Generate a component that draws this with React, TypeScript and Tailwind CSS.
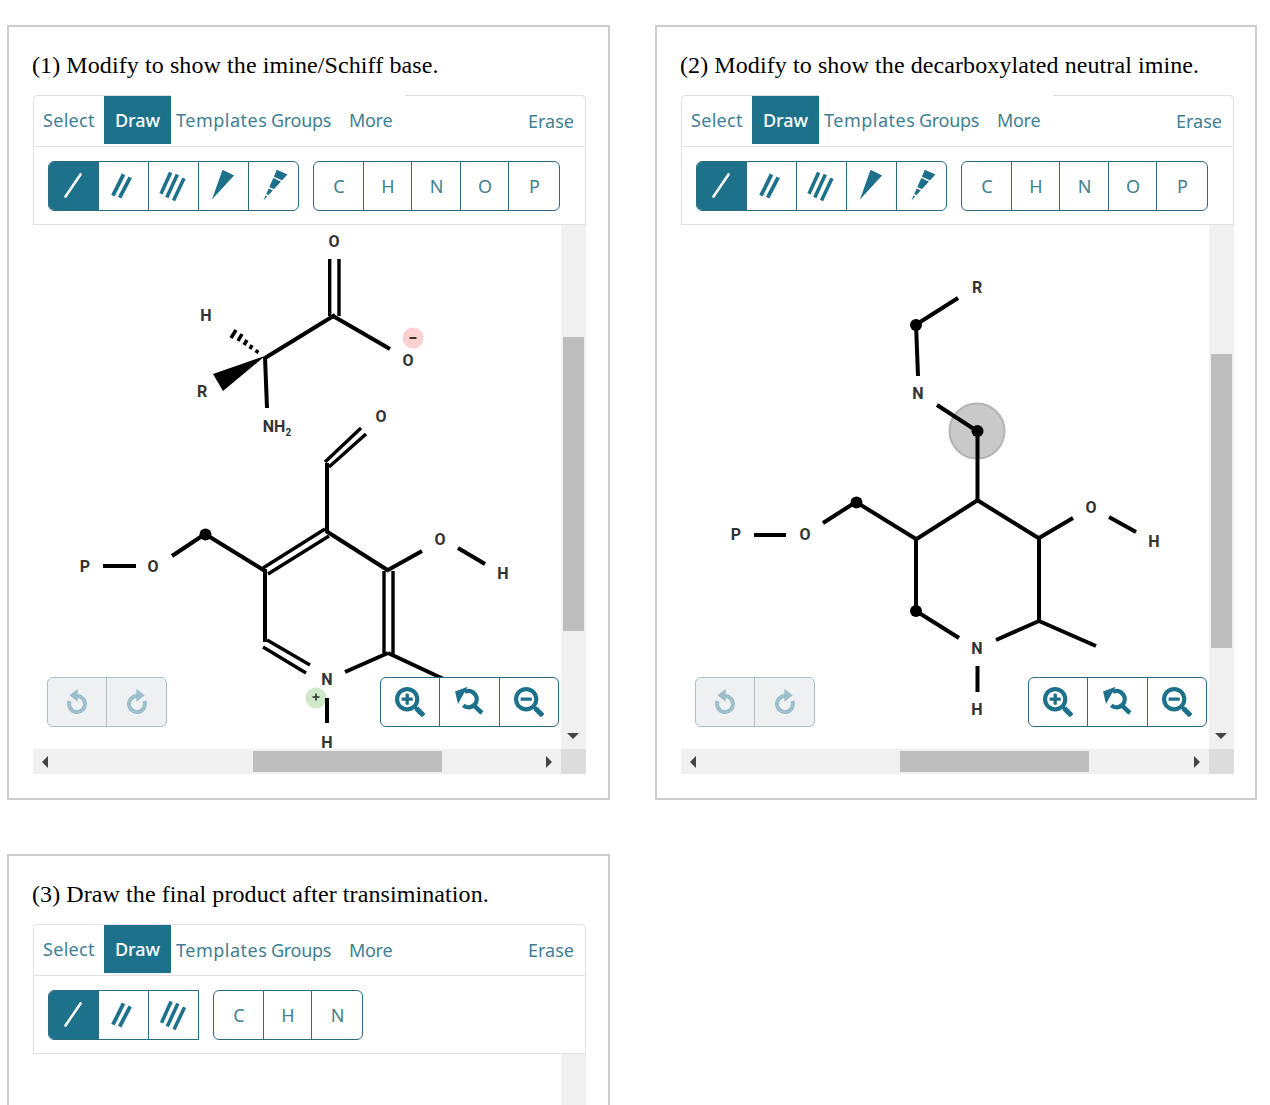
import { FaSearchPlus, FaSearchMinus } from "react-icons/fa"

const TEAL = "#1e718b"

function SingleBond({ active }: { active?: boolean }) {
  return (
    <svg viewBox="0 0 50 50" className="w-full h-full">
      <line x1="16" y1="37" x2="33" y2="12" stroke={active ? "#fff" : TEAL} strokeWidth="2.6" />
    </svg>
  )
}

function DoubleBond() {
  return (
    <svg viewBox="0 0 50 50" className="w-full h-full">
      <line x1="14" y1="35" x2="25" y2="13" stroke={TEAL} strokeWidth="4" />
      <line x1="21" y1="37" x2="32" y2="16" stroke={TEAL} strokeWidth="4" />
    </svg>
  )
}

function TripleBond() {
  return (
    <svg viewBox="0 0 50 50" className="w-full h-full">
      <line x1="12" y1="33" x2="22" y2="11" stroke={TEAL} strokeWidth="3.7" />
      <line x1="18" y1="37" x2="29" y2="13" stroke={TEAL} strokeWidth="3.7" />
      <line x1="25" y1="40" x2="36" y2="17" stroke={TEAL} strokeWidth="3.7" />
    </svg>
  )
}

function WedgeBond() {
  return (
    <svg viewBox="0 0 50 50" className="w-full h-full">
      <polygon points="13,39 24,8 36,14" fill={TEAL} />
    </svg>
  )
}

function HashBond() {
  return (
    <svg viewBox="0 0 50 50" className="w-full h-full">
      <polygon points="14,40 28,8 39,13" fill={TEAL} />
      <line x1="21.6" y1="14.7" x2="36.2" y2="21.3" stroke="#fff" strokeWidth="1.6" />
      <line x1="15" y1="24.7" x2="29.6" y2="31.3" stroke="#fff" strokeWidth="1.6" />
      <line x1="10.5" y1="31.4" x2="25.1" y2="38" stroke="#fff" strokeWidth="1.6" />
    </svg>
  )
}

function ResetZoom() {
  return (
    <svg viewBox="0 0 60 50" className="w-full h-full">
      <path d="M25 14.5 A8.5 8.5 0 1 1 23.5 28.5" fill="none" stroke={TEAL} strokeWidth="4.6" />
      <line x1="35" y1="29" x2="43" y2="36.5" stroke={TEAL} strokeWidth="4.8" />
      <polygon points="15,14 28,9 18,27" fill={TEAL} />
    </svg>
  )
}

function UndoArrow({ flip }: { flip?: boolean }) {
  return (
    <svg viewBox="0 0 24 26" className={`h-[26px] w-[24px] ${flip ? "-scale-x-100" : ""}`}>
      <path d="M12 7 A8 8 0 1 1 4.6 12" fill="none" stroke="#9dbecb" strokeWidth="4" />
      <polygon points="4.3,6.3 12.7,0 12.7,12.7" fill="#9dbecb" />
    </svg>
  )
}

function ZoomBar() {
  return (
    <div className="absolute left-[347px] top-[452px] flex h-[50px] w-[179px] rounded-md border border-[#2b6c83] bg-white">
      <div className="flex w-[59px] items-center justify-center border-r border-[#2b6c83] text-[#1e718b]">
        <FaSearchPlus size={30} />
      </div>
      <div className="w-[60px] border-r border-[#2b6c83]">
        <ResetZoom />
      </div>
      <div className="flex flex-1 items-center justify-center text-[#1e718b]">
        <FaSearchMinus size={30} />
      </div>
    </div>
  )
}

function UndoBar() {
  return (
    <div className="absolute left-[14px] top-[452px] flex h-[50px] w-[120px] rounded-md border border-[#a5c2cd] bg-[#eef0f1]">
      <div className="flex w-[59px] items-center justify-center border-r border-[#a5c2cd]">
        <UndoArrow />
      </div>
      <div className="flex flex-1 items-center justify-center">
        <UndoArrow flip />
      </div>
    </div>
  )
}

function Bond({ d, w = 4 }: { d: number[]; w?: number }) {
  return <line x1={d[0]} y1={d[1]} x2={d[2]} y2={d[3]} stroke="#000" strokeWidth={w} />
}

function Label({ x, y, children }: { x: number; y: number; children: React.ReactNode }) {
  return (
    <text x={x} y={y + 5.5} textAnchor="middle" fill="#333" fontSize="16" fontWeight="700" fontFamily="Roboto, sans-serif">
      {children}
    </text>
  )
}

function MoleculeOne() {
  return (
    <svg viewBox="33 225 528 524" className="absolute left-0 top-0 h-[524px] w-[528px] overflow-visible">
      <Label x={334} y={241}>O</Label>
      <Bond d={[329.7, 259, 329.7, 316]} w={3.4} />
      <Bond d={[339, 259, 339, 316]} w={3.4} />
      <Bond d={[333, 316, 390, 349]} />
      <Bond d={[335, 315, 265, 358]} />
      <Bond d={[265, 357, 267, 408]} />
      <polygon points="265,356 213,374 223,391" fill="#000" />
      <line x1="231" y1="338" x2="236" y2="330" stroke="#000" strokeWidth="3.5" />
      <line x1="238" y1="341" x2="242" y2="334" stroke="#000" strokeWidth="3.5" />
      <line x1="244" y1="345" x2="247" y2="340" stroke="#000" strokeWidth="3.5" />
      <line x1="250" y1="349" x2="252" y2="345" stroke="#000" strokeWidth="3.5" />
      <line x1="256" y1="353" x2="258" y2="350" stroke="#000" strokeWidth="3.5" />
      <Label x={206} y={315}>H</Label>
      <Label x={202} y={391}>R</Label>
      <Label x={277} y={426}>
        NH<tspan fontSize="10" dy="4">2</tspan>
      </Label>
      <circle cx="413" cy="338" r="10.5" fill="#fbd0d0" />
      <line x1="409.5" y1="338" x2="416.5" y2="338" stroke="#333" strokeWidth="2" />
      <Label x={408} y={360}>O</Label>

      <Label x={381} y={416}>O</Label>
      <Bond d={[325, 462, 361, 428]} w={3.4} />
      <Bond d={[329, 467, 366, 434]} w={3.4} />
      <Bond d={[327, 463, 327, 532]} />
      <Bond d={[263, 568, 325, 529]} w={3.4} />
      <Bond d={[268, 574, 329, 536]} w={3.4} />
      <Bond d={[326, 531, 389, 571]} />
      <Bond d={[388, 570, 422, 551]} />
      <Label x={440} y={539}>O</Label>
      <Bond d={[458, 548, 485, 564]} />
      <Label x={503} y={573}>H</Label>
      <Bond d={[384, 571, 384, 653]} w={3.4} />
      <Bond d={[393, 571, 393, 654]} w={3.4} />
      <Bond d={[388, 653, 345, 672]} />
      <Bond d={[388, 653, 450, 682]} />
      <Bond d={[265, 569, 265, 642]} />
      <Bond d={[267, 640, 310, 665]} w={3.4} />
      <Bond d={[263, 647, 306, 673]} w={3.4} />
      <Label x={327} y={679}>N</Label>
      <circle cx="316" cy="698" r="10.5" fill="#cfe8c9" />
      <line x1="312.5" y1="697" x2="319.5" y2="697" stroke="#333" strokeWidth="1.6" />
      <line x1="316" y1="693.5" x2="316" y2="700.5" stroke="#333" strokeWidth="1.6" />
      <Bond d={[327, 698, 327, 723]} />
      <Label x={327} y={742}>H</Label>
      <Bond d={[265, 571, 205, 534]} />
      <circle cx="205.5" cy="534.5" r="6" fill="#000" />
      <Bond d={[205, 534, 172, 556]} />
      <Label x={153} y={566}>O</Label>
      <Bond d={[103, 566, 136, 566]} />
      <Label x={85} y={566}>P</Label>
    </svg>
  )
}

function MoleculeTwo() {
  return (
    <svg viewBox="681 225 528 524" className="absolute left-0 top-0 h-[524px] w-[528px] overflow-visible">
      <Label x={977} y={287}>R</Label>
      <Bond d={[958, 298, 917, 324]} />
      <circle cx="916" cy="325" r="6" fill="#000" />
      <Bond d={[916, 324, 918, 376]} />
      <Label x={918} y={393}>N</Label>
      <circle cx="977" cy="431" r="27.5" fill="#c9c9c9" stroke="#b4b4b4" strokeWidth="2" />
      <Bond d={[937, 405, 977, 431]} />
      <circle cx="977.5" cy="431" r="6" fill="#000" />
      <Bond d={[977.5, 431, 977.5, 501]} />
      <Bond d={[978, 500, 915, 540]} />
      <Bond d={[977, 500, 1040, 539]} />
      <Bond d={[916, 538, 916, 611]} />
      <circle cx="916" cy="611" r="6" fill="#000" />
      <Bond d={[916, 611, 959, 638]} />
      <Label x={977} y={648}>N</Label>
      <Bond d={[996, 640, 1039, 621]} />
      <Bond d={[1039, 538, 1039, 621]} />
      <Bond d={[1039, 621, 1096, 646]} />
      <Bond d={[977.5, 666, 977.5, 692]} />
      <Label x={977} y={709}>H</Label>
      <Bond d={[1039, 538, 1073, 518]} />
      <Label x={1091} y={507}>O</Label>
      <Bond d={[1109, 517, 1136, 532]} />
      <Label x={1154} y={541}>H</Label>
      <Bond d={[916, 539, 856, 502]} />
      <circle cx="856.5" cy="502.5" r="6" fill="#000" />
      <Bond d={[856, 502, 823, 523]} />
      <Label x={805} y={534}>O</Label>
      <Bond d={[754, 535, 786, 535]} />
      <Label x={736} y={534}>P</Label>
    </svg>
  )
}

function Triangle({ dir }: { dir: "left" | "right" | "down" }) {
  if (dir === "down") return <div className="h-0 w-0 border-x-[6px] border-t-[6px] border-x-transparent border-t-[#444]" />
  if (dir === "left") return <div className="h-0 w-0 border-y-[6px] border-r-[6px] border-y-transparent border-r-[#444]" />
  return <div className="h-0 w-0 border-y-[6px] border-l-[6px] border-y-transparent border-l-[#444]" />
}

function ToolButton({ children, width, last, active }: { children: React.ReactNode; width: string; last?: boolean; active?: boolean }) {
  return (
    <div className={`${width} flex shrink-0 items-center justify-center ${last ? "" : "border-r border-[#2b6c83]"} ${active ? "bg-[#1e718b]" : ""}`}>
      {children}
    </div>
  )
}

function AtomText({ children }: { children: React.ReactNode }) {
  return <span className="pl-px pt-px text-[18px] text-[#44808f]">{children}</span>
}

function Sketcher({ full, coverTop, children, thumbTop, thumbLeft }: { full?: boolean; coverTop?: boolean; children?: React.ReactNode; thumbTop: string; thumbLeft: string }) {
  return (
    <div className="w-[553px] font-['Noto_Sans',sans-serif]">
      {/* tab bar */}
      <div className="flex h-[52px] rounded-t border border-[#e2e2e2] text-[18px] leading-none text-[#3f7f94]">
        <div className="flex h-[48px] w-[70px] items-center pl-[9px] tracking-[0.3px]">Select</div>
        <div className="flex h-[48px] w-[67px] items-center justify-center bg-[#1e718b] text-[18px] font-medium text-white">Draw</div>
        <div className={`flex h-[49px] w-[234px] items-center bg-white pl-[5px] ${coverTop ? "-mt-px" : ""}`}>
          <span className="w-[95px] tracking-[0.5px]">Templates</span>
          <span className="w-[78px] tracking-[-0.3px]">Groups</span>
          <span className="tracking-[-0.3px]">More</span>
        </div>
        <div className="ml-auto flex h-[50px] items-center pr-[11px]">Erase</div>
      </div>

      {/* tools */}
      <div className="flex h-[78px] items-center gap-[14px] border-x border-b border-[#e2e2e2] pl-[14px]">
        <div className={`flex h-[50px] overflow-hidden rounded-md border border-[#2b6c83] ${full ? "w-[251px] " : "w-[151px] rounded-r-none"}`}>
          <ToolButton width="w-[50px]" active><SingleBond active /></ToolButton>
          <ToolButton width="w-[50px]"><DoubleBond /></ToolButton>
          <ToolButton width="w-[50px]" last={!full}><TripleBond /></ToolButton>
          {full && <ToolButton width="w-[50px]"><WedgeBond /></ToolButton>}
          {full && <ToolButton width="w-[50px]" last><HashBond /></ToolButton>}
        </div>
        <div className={`flex h-[50px] rounded-md border border-[#2b6c83] ${full ? "w-[247px]" : "w-[150px]"}`}>
          <ToolButton width="w-[50px]"><AtomText>C</AtomText></ToolButton>
          <ToolButton width="w-[48px]"><AtomText>H</AtomText></ToolButton>
          <ToolButton width={full ? "w-[49px]" : "flex-1"} last={!full}><AtomText>N</AtomText></ToolButton>
          {full && <ToolButton width="w-[48px]"><AtomText>O</AtomText></ToolButton>}
          {full && <ToolButton width="flex-1" last><AtomText>P</AtomText></ToolButton>}
        </div>
      </div>

      {/* canvas + scrollbars */}
      <div className="flex h-[524px]">
        <div className="relative h-full w-[528px]">
          {children}
          {full && <UndoBar />}
          {full && <ZoomBar />}
        </div>
        <div className="flex w-[25px] flex-col bg-[#f0f0f0] px-[2px]">
          {full && <div className={`${thumbTop} h-[294px] bg-[#bdbdbd]`} />}
          {full && <div className="mt-auto mb-[10px] flex justify-center pr-px"><Triangle dir="down" /></div>}
        </div>
      </div>
      {full && (
        <div className="flex h-[25px]">
          <div className="flex w-[528px] items-center bg-[#f0f0f0]">
            <div className="ml-[9px] w-[6px]"><Triangle dir="left" /></div>
            <div className={`${thumbLeft} h-[21px] w-[189px] bg-[#bdbdbd]`} />
            <div className="ml-auto mr-[9px]"><Triangle dir="right" /></div>
          </div>
          <div className="w-[25px] bg-[#dcdcdc]" />
        </div>
      )}
    </div>
  )
}

function Card({ title, children }: { title: string; children: React.ReactNode }) {
  return (
    <div className="h-[775px] border-2 border-[#cccccc] bg-white pl-[24px] pt-[23px]">
      <h2 className="-ml-px mb-[14px] h-[31px] font-['Liberation_Serif',serif] text-[24px] leading-[31px] tracking-[0.09px] text-black">{title}</h2>
      {children}
    </div>
  )
}

export default function App() {
  return (
    <div className="h-[1105px] overflow-hidden bg-white pl-[7px] pt-[25px]">
      <div className="grid w-[1250px] grid-cols-[603px_602px] gap-x-[45px] gap-y-[54px]">
        <Card title="(1) Modify to show the imine/Schiff base.">
          <Sketcher full coverTop thumbTop="mt-[112px]" thumbLeft="ml-[205px]">
            <MoleculeOne />
          </Sketcher>
        </Card>
        <Card title="(2) Modify to show the decarboxylated neutral imine.">
          <Sketcher full coverTop thumbTop="mt-[129px]" thumbLeft="ml-[204px]">
            <MoleculeTwo />
          </Sketcher>
        </Card>
        <Card title="(3) Draw the final product after transimination.">
          <Sketcher thumbTop="" thumbLeft="" />
        </Card>
      </div>
    </div>
  )
}
